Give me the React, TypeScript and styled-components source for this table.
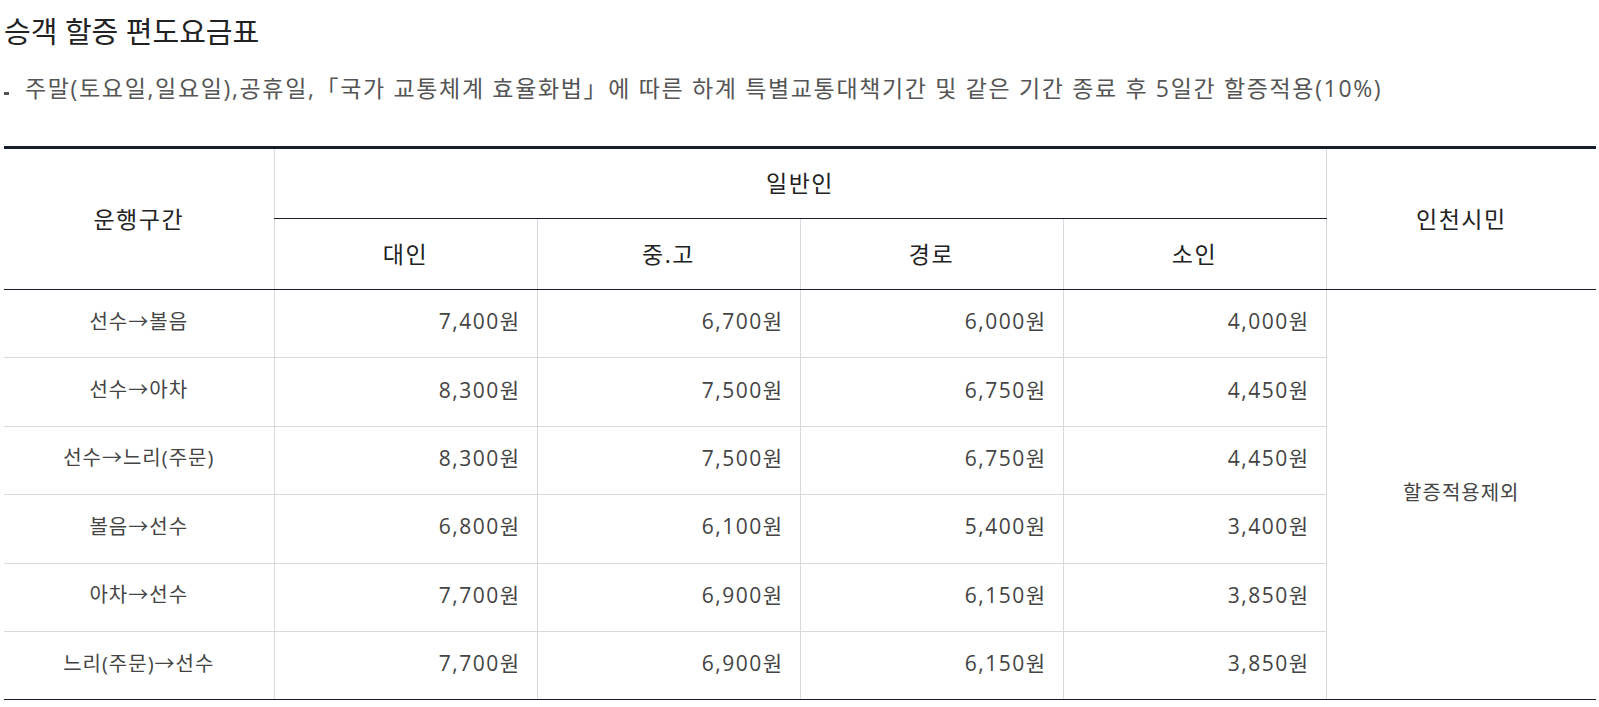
import styled, { createGlobalStyle } from "styled-components";

const GlobalStyle = createGlobalStyle`
  html, body {
    margin: 0;
    padding: 0;
    background: #ffffff;
  }
  body {
    font-family: "Open Sans", "Noto Sans CJK KR", sans-serif;
  }
`;

type Fare = {
  route: string;
  adult: string;
  youth: string;
  senior: string;
  child: string;
};

const fares: Fare[] = [
  { route: "선수→볼음", adult: "7,400원", youth: "6,700원", senior: "6,000원", child: "4,000원" },
  { route: "선수→아차", adult: "8,300원", youth: "7,500원", senior: "6,750원", child: "4,450원" },
  { route: "선수→느리(주문)", adult: "8,300원", youth: "7,500원", senior: "6,750원", child: "4,450원" },
  { route: "볼음→선수", adult: "6,800원", youth: "6,100원", senior: "5,400원", child: "3,400원" },
  { route: "아차→선수", adult: "7,700원", youth: "6,900원", senior: "6,150원", child: "3,850원" },
  { route: "느리(주문)→선수", adult: "7,700원", youth: "6,900원", senior: "6,150원", child: "3,850원" },
];

const DARK = "#161d2b";
const LIGHT = "#d9d9d9";

const App = () => {
  return (
    <>
      <GlobalStyle />
      <Page>
        <Title>승객 할증 편도요금표</Title>
        <Note>
          주말(토요일,일요일),공휴일,「국가 교통체계 효율화법」에 따른 하계
          특별교통대책기간 및 같은 기간 종료 후 5일간 할증적용(10%)
        </Note>
        <FareTable>
          <colgroup>
            <col style={{ width: 270 }} />
            <col style={{ width: 263 }} />
            <col style={{ width: 263 }} />
            <col style={{ width: 263 }} />
            <col style={{ width: 263 }} />
            <col style={{ width: 270 }} />
          </colgroup>
          <thead>
            <TopRow>
              <HeadCell rowSpan={2} $bottom>
                운행구간
              </HeadCell>
              <HeadCell colSpan={4} $divider $left>
                일반인
              </HeadCell>
              <HeadCell rowSpan={2} $bottom $left>
                인천시민
              </HeadCell>
            </TopRow>
            <SubRow>
              <HeadCell $bottom $left>대인</HeadCell>
              <HeadCell $bottom $left>중.고</HeadCell>
              <HeadCell $bottom $left>경로</HeadCell>
              <HeadCell $bottom $left>소인</HeadCell>
            </SubRow>
          </thead>
          <tbody>
            {fares.map((fare, i) => {
              const last = i === fares.length - 1;
              return (
                <BodyRow key={fare.route + i}>
                  <Cell $last={last}>{fare.route}</Cell>
                  <Cell $align="right" $last={last} $left>{fare.adult}</Cell>
                  <Cell $align="right" $last={last} $left>{fare.youth}</Cell>
                  <Cell $align="right" $last={last} $left>{fare.senior}</Cell>
                  <Cell $align="right" $last={last} $left>{fare.child}</Cell>
                  {i === 0 && (
                    <Cell rowSpan={fares.length} $last $left>
                      할증적용제외
                    </Cell>
                  )}
                </BodyRow>
              );
            })}
          </tbody>
        </FareTable>
      </Page>
    </>
  );
};

export default App;

const Page = styled.div`
  padding: 0 3px 0 4px;
`;

const Title = styled.h2`
  margin: 0;
  padding-top: 12px;
  font-size: 29px;
  line-height: 40px;
  font-weight: 400;
  color: #222222;
`;

const Note = styled.p`
  position: relative;
  margin: 20px 0 0;
  padding-left: 21px;
  font-size: 23px;
  line-height: 32px;
  letter-spacing: 1.65px;
  color: #555555;
  white-space: nowrap;

  &:before {
    content: "";
    position: absolute;
    left: 0;
    top: 20px;
    width: 5px;
    height: 3px;
    background-color: #555555;
  }
`;

const FareTable = styled.table`
  width: 1592px;
  margin-top: 42px;
  border-collapse: collapse;
  table-layout: fixed;
  border-top: 3px solid ${DARK};
`;

const TopRow = styled.tr`
  height: 71px;
`;

const SubRow = styled.tr`
  height: 71px;
`;

const BodyRow = styled.tr`
  height: 68.4px;
`;

const HeadCell = styled.th<{ $bottom?: boolean; $divider?: boolean; $left?: boolean }>`
  padding: 0 0 3px;
  font-size: 23px;
  font-weight: 400;
  letter-spacing: 1.5px;
  color: #222222;
  text-align: center;
  vertical-align: middle;
  border-left: ${(p) => (p.$left ? `1px solid ${LIGHT}` : "none")};
  border-bottom: ${(p) =>
    p.$bottom || p.$divider ? `1px solid ${DARK}` : "none"};
`;

const Cell = styled.td<{ $align?: "center" | "right"; $last?: boolean; $left?: boolean }>`
  padding: ${(p) => (p.$align === "right" ? "0 16px 7px 0" : "0 0 7px")};
  font-size: ${(p) => (p.$align === "right" ? "21px" : "20px")};
  letter-spacing: ${(p) => (p.$align === "right" ? "1.5px" : "1px")};
  color: #444444;
  text-align: ${(p) => p.$align ?? "center"};
  vertical-align: middle;
  border-left: ${(p) => (p.$left ? `1px solid ${LIGHT}` : "none")};
  border-bottom: 1px solid ${(p) => (p.$last ? DARK : LIGHT)};
`;
